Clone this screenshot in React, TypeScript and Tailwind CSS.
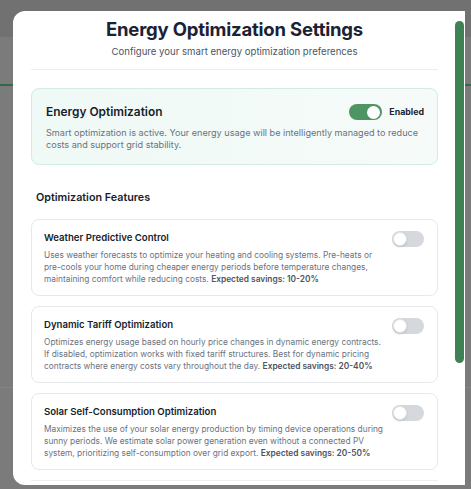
import React from 'react';

interface FeatureCardProps {
    title: string;
    description: string;
    savings: string;
}

const font = { fontFamily: 'Inter, "Liberation Sans", sans-serif' };

const OffToggle: React.FC = () => (
    <div className="flex h-[16px] w-[32px] shrink-0 items-center rounded-full bg-[#d5d8dd] px-[1px]">
        <div className="h-[14px] w-[14px] rounded-full border border-[#e3e5e8] bg-white shadow-sm" />
    </div>
);

const FeatureCard: React.FC<FeatureCardProps> = ({ title, description, savings }) => (
    <div className="flex h-[77px] items-start justify-between rounded-[8px] border border-[#e6e8eb] bg-white pl-[12px] pr-[13px] pt-[11px]">
        <div className="w-[342px]">
            <h4 className="text-[9.6px] font-semibold leading-[14px] text-[#161d2c]">{title}</h4>
            <p className="mt-[4px] text-[8.35px] leading-[12px] text-[#6b7280]">
                {description} <b className="font-semibold text-[#4b5563]">{savings}</b>
            </p>
        </div>
        <OffToggle />
    </div>
);

const App: React.FC = () => {
    return (
        <div className="relative h-[489px] w-[471px] overflow-hidden bg-[#7b7b7b]" style={font}>
            {/* dimmed page behind the dialog */}
            <div className="h-[37px] bg-[#717171]" />
            <div className="mt-[47px] h-[2px] bg-[#2f6b44]" />
            <div className="mt-[301px] h-[1px] bg-[#858585]" />

            <div className="absolute left-[13px] top-[11px] flex h-[474px] w-[452px] overflow-hidden rounded-l-[12px] bg-white">
                <div className="flex-1 pl-[18px] pr-[17px]">
                    <div className="pt-[6px] text-center">
                        <h2 className="text-[18.5px] font-bold leading-[24px] tracking-[-0.2px] text-[#1b2233]">Energy Optimization Settings</h2>
                        <p className="mt-[4px] text-[9.6px] leading-[14px] text-[#4b5563]">Configure your smart energy optimization preferences</p>
                    </div>
                    <div className="mt-[10px] h-[1px] bg-[#eceef0]" />

                    <div className="mt-[18px] h-[77px] rounded-[8px] border border-[#d3ece0] bg-gradient-to-r from-[#eff9f5] to-[#f6fbf9] pl-[14px] pr-[13px] pt-[14px]">
                        <div className="flex items-center justify-between">
                            <h3 className="text-[11.9px] font-semibold leading-[18px] text-[#161d2c]">Energy Optimization</h3>
                            <div className="flex items-center gap-[7px]">
                                <div className="flex h-[16px] w-[33px] items-center justify-end rounded-full bg-[#4f9564] px-[2px]">
                                    <div className="h-[13px] w-[13px] rounded-full bg-white" />
                                </div>
                                <span className="text-[8.8px] font-bold text-[#1c2333]">Enabled</span>
                            </div>
                        </div>
                        <p className="mt-[6px] text-[9.1px] leading-[12.4px] text-[#6b7280]">
                            Smart optimization is active. Your energy usage will be intelligently managed to reduce costs and support grid stability.
                        </p>
                    </div>

                    <h3 className="mt-[25px] pl-[5px] text-[10.75px] font-semibold leading-[16px] text-[#161d2c]">Optimization Features</h3>

                    <div className="mt-[13px] flex flex-col gap-[10px]">
                        <FeatureCard
                            title="Weather Predictive Control"
                            description="Uses weather forecasts to optimize your heating and cooling systems. Pre-heats or pre-cools your home during cheaper energy periods before temperature changes, maintaining comfort while reducing costs."
                            savings="Expected savings: 10-20%"
                        />
                        <FeatureCard
                            title="Dynamic Tariff Optimization"
                            description="Optimizes energy usage based on hourly price changes in dynamic energy contracts. If disabled, optimization works with fixed tariff structures. Best for dynamic pricing contracts where energy costs vary throughout the day."
                            savings="Expected savings: 20-40%"
                        />
                        <FeatureCard
                            title="Solar Self-Consumption Optimization"
                            description="Maximizes the use of your solar energy production by timing device operations during sunny periods. We estimate solar power generation even without a connected PV system, prioritizing self-consumption over grid export."
                            savings="Expected savings: 20-50%"
                        />
                    </div>
                    <div className="mt-[10px] h-[1px] bg-[#eceef0]" />
                </div>

                {/* scrollbar */}
                <div className="w-[10px] pt-[10px]">
                    <div className="h-[342px] w-[9px] rounded-full bg-[#3e8154]" />
                </div>
            </div>
        </div>
    );
};

export default App;
